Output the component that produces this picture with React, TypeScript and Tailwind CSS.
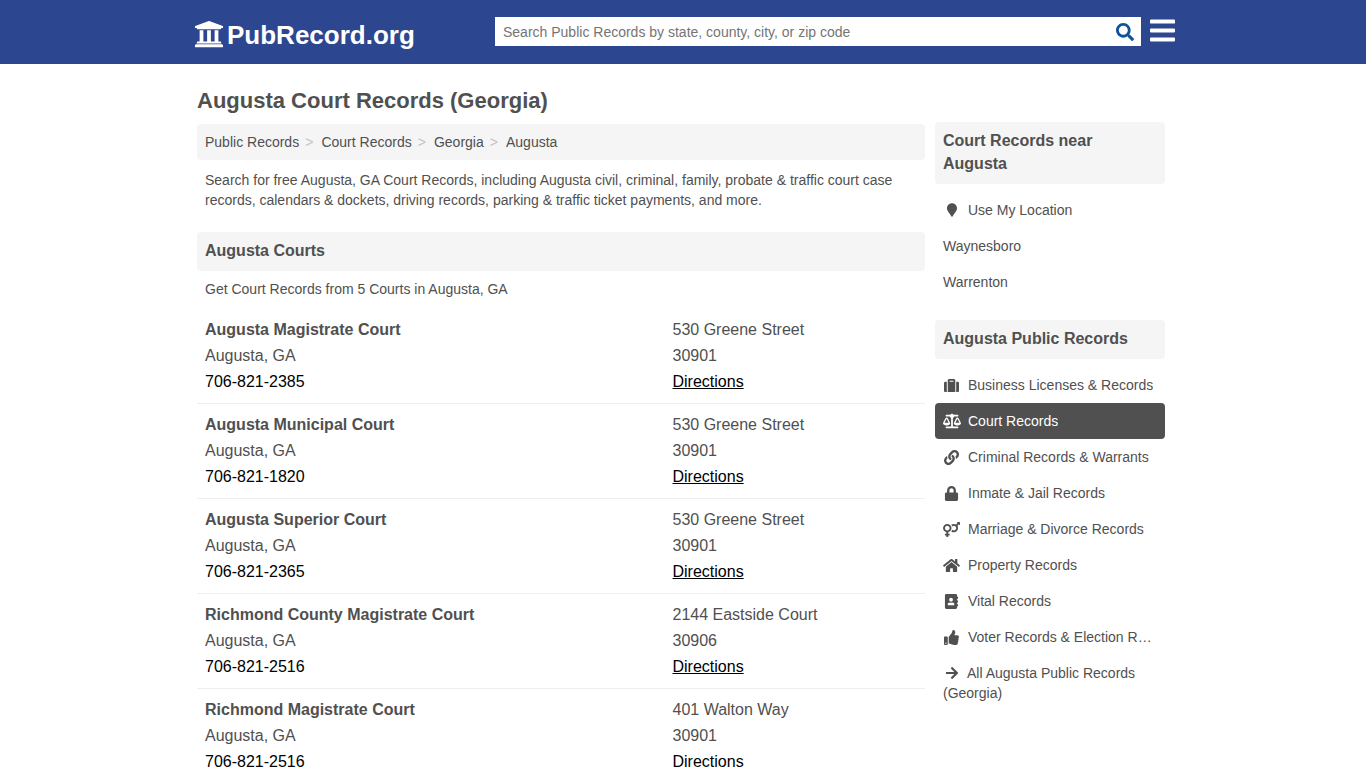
import type { IconType } from 'react-icons';
import {
  FaAddressBook,
  FaArrowRight,
  FaBalanceScale,
  FaBars,
  FaHome,
  FaLink,
  FaLock,
  FaMapMarker,
  FaSearch,
  FaSuitcase,
  FaThumbsUp,
  FaUniversity,
  FaVenusMars,
} from 'react-icons/fa';

const courts = [
  { name: 'Augusta Magistrate Court', phone: '706-821-2385', street: '530 Greene Street', zip: '30901' },
  { name: 'Augusta Municipal Court', phone: '706-821-1820', street: '530 Greene Street', zip: '30901' },
  { name: 'Augusta Superior Court', phone: '706-821-2365', street: '530 Greene Street', zip: '30901' },
  { name: 'Richmond County Magistrate Court', phone: '706-821-2516', street: '2144 Eastside Court', zip: '30906' },
  { name: 'Richmond Magistrate Court', phone: '706-821-2516', street: '401 Walton Way', zip: '30901' },
];

const crumbs = ['Public Records', 'Court Records', 'Georgia', 'Augusta'];

const records: { label: string; icon: IconType; active?: boolean }[] = [
  { label: 'Business Licenses & Records', icon: FaSuitcase },
  { label: 'Court Records', icon: FaBalanceScale, active: true },
  { label: 'Criminal Records & Warrants', icon: FaLink },
  { label: 'Inmate & Jail Records', icon: FaLock },
  { label: 'Marriage & Divorce Records', icon: FaVenusMars },
  { label: 'Property Records', icon: FaHome },
  { label: 'Vital Records', icon: FaAddressBook },
  { label: 'Voter Records & Election Records', icon: FaThumbsUp },
];

const App = () => {
  return (
    <div className="h-screen overflow-hidden bg-white font-['Liberation_Sans',Arial,sans-serif] text-[14px] text-[#505050]">
      <header className="h-16 bg-[#2d4690]">
        <div className="ml-[195px] flex items-start">
          <div className="flex h-16 w-[300px] items-center pt-[5px] text-white">
            <FaUniversity className="-ml-[1px] -mt-[1px] mr-[3px] h-[30px] w-[30px]" />
            <span className="text-[26px] font-bold leading-none">PubRecord.org</span>
          </div>
          <div className="mt-[17px] flex h-[29px] w-[646px] items-center justify-between bg-white pl-2 pr-[7px]">
            <span className="pt-[2px] text-[14px] text-[#757575]">Search Public Records by state, county, city, or zip code</span>
            <FaSearch className="h-[18px] w-[18px] text-[#0f5499]" />
          </div>
          <FaBars className="ml-[9px] mt-[16px] h-[29px] w-[25px] text-white" />
        </div>
      </header>

      <main className="ml-[197px] flex w-[968px] gap-[10px]">
        <div className="w-[728px]">
          <h1 className="pt-6 text-[22px] font-bold leading-[26px]">Augusta Court Records (Georgia)</h1>
          <nav className="mt-[10px] flex h-9 items-center rounded-[4px] bg-[#f5f5f5] px-2">
            {crumbs.map((crumb, i) => (
              <span key={crumb} className="flex items-center">
                {i > 0 && <span className="w-[22.25px] pl-[6px] text-[#c4c4c4]">&gt;</span>}
                {crumb}
              </span>
            ))}
          </nav>
          <p className="mt-[10px] px-2 leading-5">
            Search for free Augusta, GA Court Records, including Augusta civil, criminal, family, probate &amp; traffic court case records, calendars &amp; dockets, driving records, parking &amp; traffic ticket payments, and more.
          </p>
          <h2 className="mt-[22px] flex h-[39px] items-center rounded-[4px] bg-[#f5f5f5] px-2 pb-[2px] text-[16px] font-bold">Augusta Courts</h2>
          <p className="mt-2 px-2 leading-5">Get Court Records from 5 Courts in Augusta, GA</p>
          <div className="mt-[10px]">
            {courts.map((court) => (
              <div key={court.name} className="grid grid-cols-[467.5px_1fr] border-b border-[#eeeeee] px-2 pb-2 pt-2 text-[16px] leading-[26px]">
                <div>
                  <div className="font-bold">{court.name}</div>
                  <div>Augusta, GA</div>
                  <div className="text-black">{court.phone}</div>
                </div>
                <div>
                  <div>{court.street}</div>
                  <div>{court.zip}</div>
                  <div className="text-black underline">Directions</div>
                </div>
              </div>
            ))}
          </div>
        </div>

        <aside className="w-[230px] pt-[58px]">
          <h3 className="rounded-[4px] bg-[#f5f5f5] px-2 pb-[9px] pt-[7px] text-[16px] font-bold leading-[23px]">Court Records near Augusta</h3>
          <ul className="mt-2">
            <li className="flex h-9 items-center px-2">
              <FaMapMarker className="ml-[4px] mr-[11px] h-[14px] w-[10px]" />
              Use My Location
            </li>
            <li className="flex h-9 items-center px-2">Waynesboro</li>
            <li className="flex h-9 items-center px-2">Warrenton</li>
          </ul>
          <h3 className="mt-5 flex h-[39px] items-center rounded-[4px] bg-[#f5f5f5] px-2 pb-[2px] text-[16px] font-bold">Augusta Public Records</h3>
          <ul className="mt-2">
            {records.map(({ label, icon: Icon, active }) => (
              <li key={label} className={`flex h-9 items-center rounded-[4px] px-2 ${active ? 'bg-[#505050] text-white' : ''}`}>
                <span className="mr-[8px] flex w-[17px] shrink-0 justify-center">
                  <Icon className={active ? 'h-[16px] w-[18px] shrink-0' : 'h-[15px] w-[17px]'} />
                </span>
                <span className="truncate">{label}</span>
              </li>
            ))}
            <li className="px-2 py-2 leading-5">
              <FaArrowRight className="ml-[2px] mr-[8px] inline h-[14px] w-[14px] align-[-2px]" />
              All Augusta Public Records (Georgia)
            </li>
          </ul>
        </aside>
      </main>
    </div>
  );
};

export default App;
